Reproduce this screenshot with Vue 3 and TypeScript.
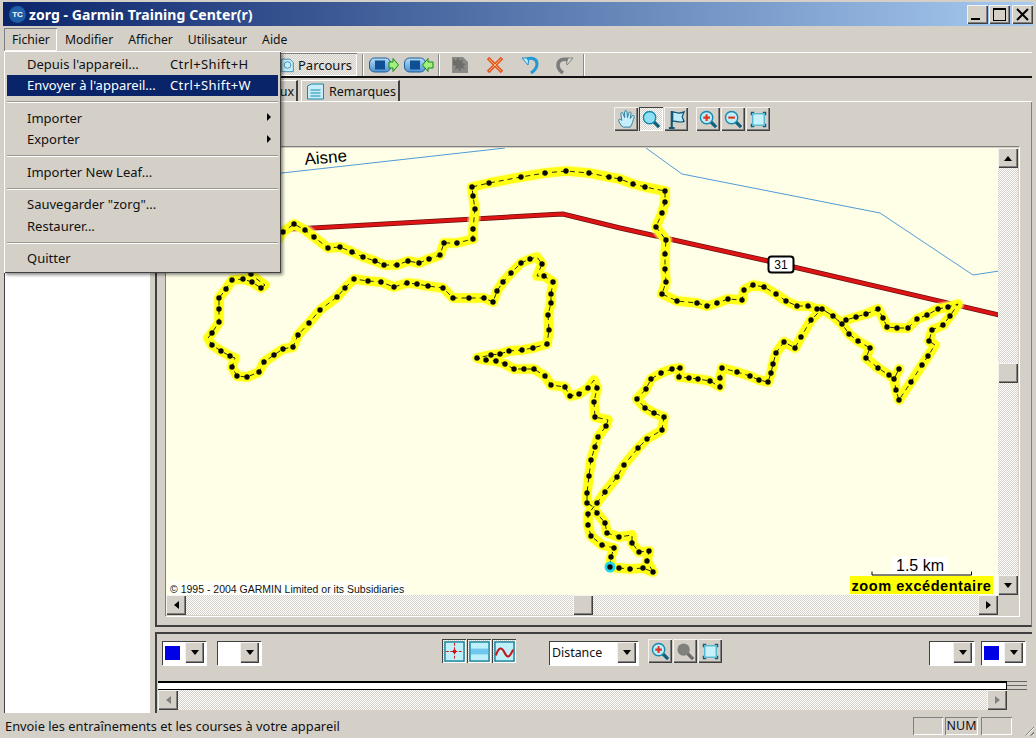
<template>
  <div class="window">
    <svg class="defs" aria-hidden="true">
      <defs>
        <linearGradient id="g-dev" x1="0" y1="0" x2="0" y2="1">
          <stop offset="0" stop-color="#b5dcf6" />
          <stop offset="1" stop-color="#4f93d0" />
        </linearGradient>
        <symbol id="i-dev-out" viewBox="0 0 30 16">
          <rect x="0.5" y="1" width="21" height="14" rx="5" fill="url(#g-dev)" stroke="#1c5f9e" />
          <rect x="6" y="3.500" width="10" height="9" fill="#0f4f94" />
          <path d="M20 5h4V1.500l5.500 6.500-5.500 6.500V11h-4z" fill="#a4f07e" stroke="#128a12" />
        </symbol>
        <symbol id="i-dev-in" viewBox="0 0 30 16">
          <rect x="0.5" y="1" width="21" height="14" rx="5" fill="url(#g-dev)" stroke="#1c5f9e" />
          <rect x="6" y="3.500" width="10" height="9" fill="#0f4f94" />
          <path d="M29 5h-5V1.500L18.500 8l5.500 6.500V11h5z" fill="#a4f07e" stroke="#128a12" />
        </symbol>
        <symbol id="i-doc" viewBox="0 0 18 18">
          <path d="M1 1h11l5 5v11H1z" fill="#8a8a86" />
          <path d="M2 2l3 3 2-4 2 4 3-2-1 4 4 1-3 2 2 3-4-1-1 4-2-4-3 2 1-4-3-1z" fill="#6d6d6a" />
        </symbol>
        <symbol id="i-x" viewBox="0 0 18 18">
          <path d="M2 2l14 14M16 2L2 16" fill="none" stroke="#e8551e" stroke-width="3.500" />
          <path d="M3 3l12 12M15 3L3 15" stroke="#ffb27a" stroke-width="1" />
        </symbol>
        <symbol id="i-undo" viewBox="0 0 18 18">
          <path d="M1 2h7L7 9z" fill="#bfe8f8" stroke="#1e90c8" />
          <path d="M6 3c5-2 10 0 10 5 0 4-3 7-6 9" fill="none" stroke="#1e9ad6" stroke-width="3" />
        </symbol>
        <symbol id="i-redo" viewBox="0 0 18 18">
          <path d="M17 2h-7l1 7z" fill="#d8d8d4" stroke="#808080" />
          <path d="M12 4C7 2 2 4 2 9c0 3 2 6 5 8" fill="none" stroke="#7c7c7c" stroke-width="3.500" />
        </symbol>
        <symbol id="i-hand" viewBox="0 0 20 20">
          <path d="M5 17C3 14 1 11 2 10s3 1 3 1L4 4c0-2 2-2 2.500 0L8 8V2c0-2 2.500-2 2.500 0L11 8l1.500-5c.5-2 2.500-1 2.200.5L14 9l2-3c1-1 2.500 0 2 1.500C17 11 16 15 14 18H7z" fill="#c9eefb" stroke="#2c7f9e" />
        </symbol>
        <symbol id="i-lens" viewBox="0 0 20 20">
          <path d="M12 12l6 6" stroke="#0f5f7f" stroke-width="3.500" />
          <circle cx="8" cy="8" r="6.500" fill="#8fe0f5" stroke="#1789ad" stroke-width="1.500" />
        </symbol>
        <symbol id="i-flag" viewBox="0 0 20 20">
          <path d="M5 1v18M2 19h6" stroke="#0f5674" stroke-width="2.200" fill="none" />
          <path d="M6 2c4 0 5 3 12 0l-2 5 2 5c-6 2-8-1-12 0z" fill="#bfeaf8" stroke="#0f5674" stroke-width="1.300" />
        </symbol>
        <symbol id="i-zoom-in" viewBox="0 0 20 20">
          <path d="M12 12l6 6" stroke="#0f5f7f" stroke-width="3.500" />
          <circle cx="8" cy="8" r="6.500" fill="#bfeefa" stroke="#1789ad" stroke-width="1.500" />
          <path d="M4.500 8h7M8 4.500v7" stroke="#e2301e" stroke-width="2.200" />
        </symbol>
        <symbol id="i-zoom-out" viewBox="0 0 20 20">
          <path d="M12 12l6 6" stroke="#0f5f7f" stroke-width="3.500" />
          <circle cx="8" cy="8" r="6.500" fill="#bfeefa" stroke="#1789ad" stroke-width="1.500" />
          <path d="M4.500 8h7" stroke="#e2301e" stroke-width="2.200" />
        </symbol>
        <symbol id="i-zoom-off" viewBox="0 0 20 20">
          <path d="M12 12l6 6" stroke="#6c6c6a" stroke-width="3.500" />
          <circle cx="8" cy="8" r="6.500" fill="#80807c" />
        </symbol>
        <symbol id="i-fit" viewBox="0 0 20 20">
          <rect x="4" y="4" width="12" height="12" fill="#c8f2fb" stroke="#35b0d0" stroke-width="1.200" />
          <path d="M2.500 5.500v-3h3M14.500 2.500h3v3M17.500 14.500v3h-3M5.500 17.500h-3v-3" fill="none" stroke="#135d80" stroke-width="1.300" />
        </symbol>
        <symbol id="i-cross" viewBox="0 0 22 22">
          <rect x="1" y="1" width="20" height="20" fill="#bdf0f8" stroke="#168098" stroke-width="1.500" />
          <path d="M2 11h18M11 2v18" stroke="#d01818" stroke-dasharray="3 1.500" />
          <circle cx="11" cy="11" r="2" fill="#d01818" />
        </symbol>
        <symbol id="i-bands" viewBox="0 0 22 22">
          <rect x="1" y="1" width="20" height="20" fill="#bdf0f8" stroke="#168098" stroke-width="1.500" />
          <rect x="2" y="8" width="18" height="6" fill="#6fc6ee" />
        </symbol>
        <symbol id="i-wave" viewBox="0 0 22 22">
          <rect x="1" y="1" width="20" height="20" fill="#bdf0f8" stroke="#168098" stroke-width="1.500" />
          <path d="M2 15c3-9 6-9 9-3s5 6 9-3" fill="none" stroke="#c8141c" stroke-width="2.200" />
        </symbol>
        <symbol id="i-notes" viewBox="0 0 18 18">
          <path d="M1 3l4-2h12v15H1z" fill="#c7eef8" stroke="#168ab0" />
          <path d="M4 7h10M4 10h10M4 13h10" stroke="#168ab0" />
        </symbol>
        <symbol id="i-route" viewBox="0 0 18 18">
          <path d="M2 2h10l4 4v11H2z" fill="#c7eef8" stroke="#2a82a8" />
          <circle cx="9" cy="9" r="4" fill="none" stroke="#2a82a8" />
        </symbol>
      </defs>
    </svg>

    <header class="titlebar">
      <span class="app-icon">TC</span>
      <span class="app-title">zorg - Garmin Training Center(r)</span>
      <div class="win-controls">
        <button class="win-btn raised"><span class="win-min"></span></button>
        <button class="win-btn raised"><span class="win-max"></span></button>
        <button class="win-btn raised win-close">
          <svg width="13" height="13" viewBox="0 0 13 13"><path d="M1 1l11 11M12 1L1 12" stroke="#000" stroke-width="2" /></svg>
        </button>
      </div>
    </header>

    <nav class="menubar">
      <span v-for="m in menus" :key="m" class="menu-title" :class="{ open: m === 'Fichier' }">{{ m }}</span>
    </nav>

    <div class="workspace">
      <aside class="sidebar"><div class="sidebar-list"></div></aside>

      <main class="main">
        <div class="toolbar">
          <button class="parcours">
            <svg width="15" height="16"><use href="#i-route" /></svg>
            Parcours
          </button>
          <span class="tool-sep first"></span>
          <span class="tb-icon wide"><svg width="30" height="16"><use href="#i-dev-out" /></svg></span>
          <span class="tb-icon wide"><svg width="30" height="16"><use href="#i-dev-in" /></svg></span>
          <span class="tool-sep second"></span>
          <span class="tb-icon"><svg width="18" height="18"><use href="#i-doc" /></svg></span>
          <span class="tb-icon"><svg width="18" height="18"><use href="#i-x" /></svg></span>
          <span class="tb-icon"><svg width="18" height="18"><use href="#i-undo" /></svg></span>
          <span class="tb-icon"><svg width="18" height="18"><use href="#i-redo" /></svg></span>
          <span class="tool-sep third"></span>
        </div>

        <div class="tabs">
          <span class="tab tab-hidden">ux</span>
          <span class="tab">
            <svg width="19" height="18"><use href="#i-notes" /></svg>
            Remarques
          </span>
        </div>

        <section class="map-panel">
          <div class="map-tools">
            <button v-for="t in mapTools" :key="t.icon" class="icon-btn raised" :class="{ active: t.active, gap: t.gap }">
              <svg width="19" height="19"><use :href="'#' + t.icon" /></svg>
            </button>
          </div>

          <div class="map-frame">
            <div class="map-grid">
              <svg class="map" width="832" height="447" viewBox="166 148 832 447">
                <rect x="166" y="148" width="832" height="447" fill="#ffffe8" />
                <polyline points="166,195 282,173 505,148" class="river" />
                <polyline points="646,148 682,174 880,213 973,275 999,271" class="river" />
                <polyline points="166,235 313,228 553,214.500 563,214 620,228 768,261 999,315" class="road-edge" />
                <polyline points="166,235 313,228 553,214.500 563,214 620,228 768,261 999,315" class="road" />
                <text x="305" y="165" class="label" transform="rotate(-5 305 165)">Aisne</text>

                <rect x="768.500" y="256.500" width="25" height="16" rx="3" fill="#fff" stroke="#000" stroke-width="2" />
                <text x="781" y="269" class="shield">31</text>

                <polyline :points="trackLine" class="track-halo" />
                <polyline :points="trackLine" class="track-glow" />
                <polyline :points="trackLine" class="track-line" />
                <circle cx="610" cy="567" r="5.500" fill="#1fd8ee" />
                <circle v-for="(p, i) in trackDots" :key="i" :cx="p[0]" :cy="p[1]" r="2.700" fill="#0a0a0a" />

                <rect x="169" y="581" width="237" height="14" fill="#fff" opacity="0.75" />
                <text x="170" y="593" class="copyright">© 1995 - 2004 GARMIN Limited or its Subsidiaries</text>
                <rect x="892" y="557" width="56" height="17" fill="#fff" />
                <text x="920" y="571" class="scale-text">1.5 km</text>
                <path d="M872 571.500v3.500h99.500v-3.500" fill="none" stroke="#000" />
                <rect x="850" y="576" width="143" height="18" fill="#ffff00" />
                <text x="921.500" y="591" class="zoom-text">zoom excédentaire</text>
              </svg>

              <div class="sb-v">
                <button class="sb-btn raised"><span class="arr up"></span></button>
                <div class="sb-track"><button class="sb-thumb raised thumb-v"></button></div>
                <button class="sb-btn raised"><span class="arr down"></span></button>
              </div>

              <div class="sb-h">
                <button class="sb-btn raised"><span class="arr left"></span></button>
                <div class="sb-track"><button class="sb-thumb raised thumb-h"></button></div>
                <button class="sb-btn raised"><span class="arr right"></span></button>
              </div>
              <div class="sb-corner"></div>
            </div>
          </div>
        </section>

        <section class="chart-panel">
          <div class="combo color"><span class="combo-value"><i class="swatch"></i></span><button class="combo-btn raised"><span class="arr down"></span></button></div>
          <div class="combo color second"><span class="combo-value"></span><button class="combo-btn raised"><span class="arr down"></span></button></div>

          <div class="chart-modes">
            <button v-for="t in chartModes" :key="t" class="mode-btn">
              <svg width="21" height="21"><use :href="'#' + t" /></svg>
            </button>
          </div>

          <div class="combo distance"><span class="combo-value">Distance</span><button class="combo-btn raised"><span class="arr down"></span></button></div>

          <div class="chart-zoom">
            <button v-for="t in chartZoom" :key="t" class="icon-btn raised">
              <svg width="19" height="19"><use :href="'#' + t" /></svg>
            </button>
          </div>

          <div class="combo color push"><span class="combo-value"></span><button class="combo-btn raised"><span class="arr down"></span></button></div>
          <div class="combo color last"><span class="combo-value"><i class="swatch"></i></span><button class="combo-btn raised"><span class="arr down"></span></button></div>
        </section>

        <section class="chart-strip">
          <div class="strip-top">
            <div class="strip-white"></div>
            <div class="splitter"></div>
          </div>
          <div class="sb-h bottom">
            <button class="sb-btn raised"><span class="arr left off"></span></button>
            <div class="sb-track"></div>
            <button class="sb-btn raised"><span class="arr right off"></span></button>
          </div>
        </section>
      </main>
    </div>

    <footer class="statusbar">
      <span class="status-text">Envoie les entraînements et les courses à votre appareil</span>
      <span class="status-cell c1"></span>
      <span class="status-cell c2">NUM</span>
      <span class="status-cell c3"></span>
      <span class="grip"></span>
    </footer>

    <!-- open Fichier menu -->
    <div class="dropdown">
      <template v-for="(item, i) in fileMenu" :key="i">
        <div v-if="item.sep" class="menu-sep"></div>
        <div v-else class="menu-item" :class="{ hot: item.hot }">
          <span class="menu-label">{{ item.label }}</span>
          <span v-if="item.keys" class="menu-keys">{{ item.keys }}</span>
          <span v-if="item.sub" class="menu-arrow"></span>
        </div>
      </template>
    </div>
  </div>
</template>

<script setup lang="ts">
import { computed } from 'vue'

interface MenuItem {
  label?: string
  keys?: string
  hot?: boolean
  sub?: boolean
  sep?: boolean
}

const menus = ['Fichier', 'Modifier', 'Afficher', 'Utilisateur', 'Aide']

const fileMenu: MenuItem[] = [
  { label: "Depuis l'appareil...", keys: 'Ctrl+Shift+H' },
  { label: "Envoyer à l'appareil...", keys: 'Ctrl+Shift+W', hot: true },
  { sep: true },
  { label: 'Importer', sub: true },
  { label: 'Exporter', sub: true },
  { sep: true },
  { label: 'Importer New Leaf...' },
  { sep: true },
  { label: 'Sauvegarder "zorg"...' },
  { label: 'Restaurer...' },
  { sep: true },
  { label: 'Quitter' },
]

const mapTools = [
  { icon: 'i-hand' },
  { icon: 'i-lens', active: true },
  { icon: 'i-flag' },
  { icon: 'i-zoom-in', gap: true },
  { icon: 'i-zoom-out' },
  { icon: 'i-fit' },
]

const chartModes = ['i-cross', 'i-bands', 'i-wave']
const chartZoom = ['i-zoom-in', 'i-zoom-off', 'i-fit']

// x, y, and 0 for a bend without a dot
const track: number[][] = [
  [610, 567], [619, 568], [630, 569], [643, 568], [653, 572], [647, 561], [649, 551], [639, 552], [632, 543], [632, 535, 0],
  [619, 537], [607, 533], [605, 523], [597, 513], [592, 506, 0], [587, 503], [587, 493], [589, 476], [591, 460], [595, 447],
  [598, 437], [606, 426], [608, 420, 0], [595, 417], [594, 402], [597, 388], [594, 380, 0], [588, 388], [579, 394], [570, 396],
  [565, 387], [551, 385], [545, 376], [534, 369], [524, 369], [514, 369], [505, 364], [496, 361], [486, 360], [477, 358],
  [491, 355], [500, 354], [509, 351], [522, 350], [533, 348], [547, 344], [549, 330], [548, 315], [551, 303], [551, 294],
  [553, 282], [544, 276], [537, 276, 0], [542, 264], [537, 257, 0], [530, 259], [521, 263], [511, 273], [503, 282], [497, 291],
  [493, 302], [484, 298], [469, 298], [453, 298], [443, 288], [428, 286], [417, 284], [407, 283], [394, 287], [381, 282],
  [368, 281], [354, 279], [345, 288], [337, 297], [320, 310], [309, 323], [298, 335], [293, 347], [283, 349], [274, 355],
  [264, 362], [259, 372], [247, 377], [237, 376], [232, 367], [235, 358, 0], [230, 356], [221, 351], [212, 345], [208, 338, 0],
  [212, 333], [219, 322], [219, 309], [219, 298], [226, 289], [232, 280], [243, 279], [252, 282], [261, 288], [265, 285, 0],
  [254, 277, 0], [251, 274], [270, 252, 0], [283, 232], [294, 224], [305, 230], [314, 237], [328, 248], [340, 247], [352, 252],
  [363, 257], [375, 261], [384, 265], [397, 265], [408, 261], [419, 263], [429, 259], [440, 255], [444, 243], [457, 243],
  [473, 239], [473, 229], [475, 209], [473, 196], [472, 187], [489, 183], [521, 177], [545, 173], [566, 171], [589, 173],
  [609, 177], [620, 179], [633, 184], [645, 187], [665, 191], [665, 202], [662, 213], [656, 227], [666, 240], [665, 254],
  [665, 269], [666, 282], [662, 294], [677, 301], [697, 303], [707, 306], [717, 303], [728, 299], [742, 300], [744, 290],
  [753, 285], [764, 287], [776, 294], [786, 301], [797, 306], [808, 306], [817, 309], [822, 309], [833, 316], [842, 324],
  [849, 334], [858, 341], [870, 348], [866, 358], [878, 368], [889, 375], [894, 379], [899, 369], [894, 379, 0], [896, 390],
  [899, 400], [911, 382], [922, 365], [928, 356], [935, 345, 0], [929, 341], [932, 330], [943, 325], [950, 316], [958, 304, 0],
  [948, 307], [938, 309], [927, 315], [917, 319], [908, 328], [897, 328], [887, 327], [883, 318], [878, 309], [866, 314],
  [856, 317], [846, 320], [842, 324, 0], [833, 316, 0], [822, 309, 0], [811, 320], [801, 337], [795, 348], [784, 342], [776, 353],
  [773, 364], [771, 373], [768, 382], [759, 380], [750, 376], [737, 372], [722, 368], [720, 378], [720, 387], [710, 381],
  [698, 379], [689, 378], [679, 377], [680, 368], [672, 369], [661, 373], [651, 379], [646, 389], [637, 399], [645, 408],
  [654, 413], [664, 417], [662, 430], [647, 439], [638, 448], [624, 465], [617, 477], [605, 492], [597, 503], [588, 514],
  [588, 525], [591, 536], [602, 545], [614, 548], [611, 557], [610, 567, 0],
]

const trackLine = computed(() => track.map((p) => p[0] + ',' + p[1]).join(' '))
const trackDots = computed(() => track.filter((p) => p.length === 2))
</script>

<style>
html, body {
  margin: 0;
  background: #d4d0c8;
}
</style>

<style scoped>
.window {
  position: relative;
  width: 1036px;
  height: 738px;
  overflow: hidden;
  display: flex;
  flex-direction: column;
  background: #d4d0c8;
  font-family: "Noto Sans", "Open Sans", sans-serif;
  font-size: 13px;
  color: #111;
}

button {
  padding: 0;
  border: 0;
  margin: 0;
  background: #d4d0c8;
  font: inherit;
  color: inherit;
  display: flex;
  align-items: center;
  justify-content: center;
}

.defs {
  position: absolute;
  width: 0;
  height: 0;
}

.raised {
  box-shadow: inset 1px 1px 0 #f4f3ef, inset -1px -1px 0 #404040, inset -2px -2px 0 #808080;
}

.titlebar {
  height: 24px;
  margin: 2px 3px 0 3px;
  padding-left: 6px;
  display: flex;
  align-items: center;
  gap: 3px;
  background: linear-gradient(90deg, #0a246a, #a6caf0);
  color: #fff;
}

.app-icon {
  width: 17px;
  height: 17px;
  border-radius: 50%;
  background: #1f5fa8;
  color: #fff;
  font: bold 8px/17px "Liberation Sans", sans-serif;
  text-align: center;
}

.app-title {
  font-weight: 700;
  font-size: 14px;
  letter-spacing: 0.07px;
}

.win-controls {
  margin-left: auto;
  display: flex;
  gap: 1px;
}

.win-btn {
  width: 21px;
  height: 19px;
  position: relative;
}

.win-close {
  margin-left: 1px;
}

.win-min {
  position: absolute;
  left: 4px;
  bottom: 4px;
  width: 9px;
  height: 2px;
  background: #000;
}

.win-max {
  width: 11px;
  height: 10px;
  border: 1px solid #000;
  border-top-width: 2px;
}

.menubar {
  height: 26px;
  display: flex;
  align-items: center;
  padding-left: 4px;
}

.menu-title {
  height: 23px;
  line-height: 23px;
  padding: 0 7px 0 8px;
  font-size: 12.200px;
}

.menu-title.open {
  box-shadow: inset 1px 1px 0 #808080, inset -1px -1px 0 #fff;
  margin-top: 1px;
}

.workspace {
  flex: 1;
  min-height: 0;
  display: flex;
}

.sidebar {
  width: 155px;
  flex: none;
  padding-left: 4px;
  box-sizing: border-box;
}

.sidebar-list {
  width: 146px;
  height: 100%;
  box-sizing: border-box;
  background: #fff;
  border-left: 1px solid #404040;
}

.main {
  flex: 1;
  min-width: 0;
  display: flex;
  flex-direction: column;
  padding-right: 4px;
}

.toolbar {
  height: 26px;
  box-sizing: border-box;
  border-top: 1px solid #fff;
  border-bottom: 2px solid #111;
  display: flex;
  align-items: center;
  padding-left: 124px;
}

.parcours {
  width: 78px;
  height: 23px;
  gap: 3px;
  justify-content: flex-start;
  padding-left: 1px;
  background: repeating-conic-gradient(#d4d0c8 0 25%, #eeece8 0 50%) 0 0 / 2px 2px;
  box-shadow: inset 1px 1px 0 #808080, inset -1px -1px 0 #fff;
}

.tool-sep {
  width: 1px;
  height: 22px;
  background: #8a8a86;
  border-right: 1px solid #fff;
}

.tool-sep.first {
  margin: 0 4px 0 5px;
}

.tool-sep.second {
  margin: 0 2px 0 0;
}

.tool-sep.third {
  margin-left: 1px;
}

.tb-icon {
  width: 35px;
  height: 20px;
  display: flex;
  align-items: center;
  justify-content: center;
}

.tb-icon.wide {
  width: 31px;
  margin-right: 4px;
}

.tabs {
  height: 24px;
  box-sizing: border-box;
  border-bottom: 1px solid #fff;
  display: flex;
  align-items: flex-end;
  padding-left: 120px;
  gap: 3px;
}

.tab {
  height: 21px;
  box-sizing: border-box;
  display: flex;
  align-items: center;
  gap: 4px;
  padding: 1px 2px 0 4px;
  border-top: 1px solid #fff;
  border-left: 1px solid #fff;
  border-right: 2px solid #404040;
  font-size: 12.500px;
}

.tab-hidden {
  width: 23px;
  justify-content: flex-end;
}

.map-panel {
  height: 525px;
  box-sizing: border-box;
  border-left: 2px solid #404040;
  border-right: 1px solid #808080;
  border-bottom: 2px solid #404040;
  display: flex;
  flex-direction: column;
}

.map-tools {
  height: 44px;
  box-sizing: border-box;
  padding: 5px 0 0 457px;
  display: flex;
  align-items: flex-start;
  gap: 1px;
}

.icon-btn {
  width: 24px;
  height: 24px;
}

.icon-btn.gap {
  margin-left: 7px;
}

.icon-btn.active {
  background: repeating-conic-gradient(#d4d0c8 0 25%, #fff 0 50%) 0 0 / 2px 2px;
  box-shadow: inset 1px 1px 0 #404040, inset -1px -1px 0 #fff;
}

.map-frame {
  margin-left: 8px;
  width: 855px;
  height: 471px;
  box-sizing: border-box;
  border-top: 1px solid #808080;
  border-left: 1px solid #808080;
  border-right: 1px solid #fff;
  border-bottom: 1px solid #fff;
  padding: 1px 0 0 0;
}

.map-grid {
  display: grid;
  grid-template-columns: 832px 20px;
  grid-template-rows: 447px 20px;
}

.map {
  display: block;
}

.river {
  fill: none;
  stroke: #4f9ad6;
  stroke-width: 1;
}

.road-edge {
  fill: none;
  stroke: #6a1010;
  stroke-width: 5;
}

.road {
  fill: none;
  stroke: #dc1414;
  stroke-width: 3.500;
}

.label {
  font: 17px "Liberation Sans", sans-serif;
  fill: #000;
}

.shield {
  font: 12px "Liberation Sans", sans-serif;
  text-anchor: middle;
  fill: #000;
}

.track-halo {
  fill: none;
  stroke: #ffffb0;
  stroke-width: 13;
  stroke-linejoin: round;
  opacity: 0.45;
}

.track-glow {
  fill: none;
  stroke: #ffff14;
  stroke-width: 9.500;
  stroke-linejoin: round;
}

.track-line {
  fill: none;
  stroke: #111;
  stroke-width: 0.900;
  stroke-dasharray: 5 4;
}

.copyright {
  font: 10.500px "Liberation Sans", sans-serif;
  fill: #111;
}

.scale-text {
  font: 16px "Liberation Sans", sans-serif;
  text-anchor: middle;
  fill: #000;
}

.zoom-text {
  font: bold 14.500px "Liberation Sans", sans-serif;
  letter-spacing: 0.55px;
  text-anchor: middle;
  fill: #000;
}

.sb-v {
  display: flex;
  flex-direction: column;
  height: 447px;
}

.sb-h {
  display: flex;
  height: 20px;
}

.sb-btn {
  width: 20px;
  height: 20px;
  flex: none;
}

.sb-track {
  flex: 1;
  position: relative;
  background: repeating-conic-gradient(#d4d0c8 0 25%, #fff 0 50%) 0 0 / 2px 2px;
}

.sb-thumb {
  position: absolute;
  width: 20px;
  height: 20px;
}

.thumb-v {
  top: 195px;
  left: 0;
}

.thumb-h {
  left: 387px;
  top: 0;
}

.arr {
  width: 0;
  height: 0;
  display: block;
  border: 4px solid transparent;
}

.arr.up {
  border-top: 0;
  border-bottom: 5px solid #000;
}

.arr.down {
  border-bottom: 0;
  border-top: 5px solid #000;
}

.arr.left {
  border-left: 0;
  border-right: 5px solid #000;
}

.arr.right {
  border-right: 0;
  border-left: 5px solid #000;
}

.arr.left.off {
  border-right-color: #808080;
}

.arr.right.off {
  border-left-color: #808080;
}

.chart-panel {
  height: 48px;
  margin-top: 5px;
  box-sizing: border-box;
  border-top: 2px solid #404040;
  border-left: 2px solid #404040;
  display: flex;
  align-items: flex-start;
  padding: 7px 7px 0 5px;
}

.combo {
  height: 24px;
  box-sizing: border-box;
  display: flex;
  box-shadow: inset 1px 1px 0 #404040, inset -1px -1px 0 #fff, 1px 1px 0 #fff;
  background: #fff;
  padding: 1px 2px 2px 1px;
}

.combo-value {
  flex: 1;
  display: flex;
  align-items: center;
  padding-left: 2px;
}

.combo-btn {
  width: 19px;
  flex: none;
}

.combo.color {
  width: 44px;
}

.combo.second {
  margin-left: 11px;
}

.combo.push {
  margin-left: auto;
  width: 45px;
}

.combo.last {
  margin-left: 7px;
}

.swatch {
  width: 15px;
  height: 14px;
  background: #0000e6;
}

.chart-modes {
  margin: -2px 0 0 181px;
  display: flex;
  gap: 1px;
}

.mode-btn {
  width: 24px;
  height: 24px;
  background: repeating-conic-gradient(#d4d0c8 0 25%, #fff 0 50%) 0 0 / 2px 2px;
  box-shadow: inset 1px 1px 0 #404040, inset -1px -1px 0 #fff;
}

.combo.distance {
  width: 89px;
  margin-left: 33px;
  font-size: 12.400px;
}

.chart-zoom {
  margin: -2px 0 0 10px;
  display: flex;
  gap: 1px;
}

.chart-strip {
  flex: 1;
  min-height: 0;
  box-sizing: border-box;
  padding: 1px 0 0 3px;
  box-shadow: inset 2px 0 0 #404040;
}

.strip-top {
  display: flex;
  height: 9px;
}

.strip-white {
  width: 849px;
  box-sizing: border-box;
  background: #fff;
  border-top: 2px solid #000;
  border-bottom: 1px solid #000;
  border-right: 1px solid #000;
}

.splitter {
  width: 20px;
  box-sizing: border-box;
  border-top: 1px solid #666;
  border-bottom: 1px solid #666;
  background: linear-gradient(#d4d0c8 0 40%, #666 40% 55%, #d4d0c8 55%);
}

.sb-h.bottom {
  width: 849px;
}

.statusbar {
  height: 25px;
  box-sizing: border-box;
  flex: none;
  display: flex;
  align-items: center;
  padding-left: 5px;
  position: relative;
}

.status-text {
  margin-right: auto;
  font-size: 12.850px;
}

.status-cell {
  height: 18px;
  line-height: 18px;
  box-sizing: border-box;
  box-shadow: inset 1px 1px 0 #808080, inset -1px -1px 0 #fff;
  text-align: center;
  font-size: 12.500px;
}

.c1 {
  width: 30px;
}

.c2 {
  width: 33px;
  margin-left: 2px;
}

.c3 {
  width: 31px;
  margin-left: 3px;
}

.grip {
  width: 12px;
  height: 12px;
  margin: 8px 2px 0 10px;
  background: repeating-linear-gradient(135deg, #d4d0c8 0 2px, #808080 2px 3px, #fff 3px 4px);
  clip-path: polygon(100% 0, 100% 100%, 0 100%);
}

.dropdown {
  position: absolute;
  left: 4px;
  top: 51px;
  width: 277px;
  height: 222px;
  box-sizing: border-box;
  padding: 2px 3px;
  background: #d4d0c8;
  box-shadow: inset 1px 1px 0 #fff, inset -1px -1px 0 #404040, 2px 2px 3px rgba(0, 0, 0, 0.45);
}

.menu-item {
  height: 21.500px;
  position: relative;
  display: flex;
  align-items: center;
  padding-left: 20px;
}

.menu-item.hot {
  background: #0a246a;
  color: #fff;
}

.menu-label {
  width: 143px;
  white-space: nowrap;
}

.menu-keys {
  letter-spacing: 0.4px;
}

.menu-arrow {
  position: absolute;
  right: 7px;
  top: 6px;
  border: 4px solid transparent;
  border-right: 0;
  border-left: 4px solid #000;
}

.menu-sep {
  height: 2px;
  margin: 5px 0 4px;
  background: linear-gradient(#9a9890 50%, #fff 50%);
}
</style>
